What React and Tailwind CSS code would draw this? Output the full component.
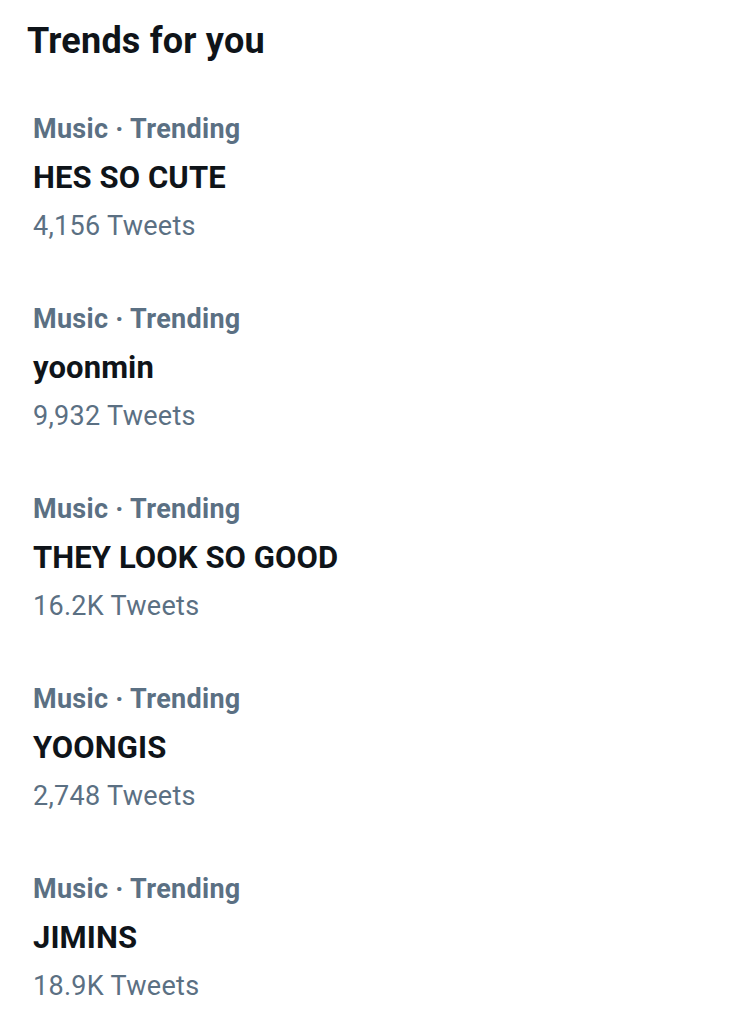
const trends = [
  { category: 'Music · Trending', name: 'HES SO CUTE', count: '4,156 Tweets' },
  { category: 'Music · Trending', name: 'yoonmin', count: '9,932 Tweets' },
  { category: 'Music · Trending', name: 'THEY LOOK SO GOOD', count: '16.2K Tweets' },
  { category: 'Music · Trending', name: 'YOONGIS', count: '2,748 Tweets' },
  { category: 'Music · Trending', name: 'JIMINS', count: '18.9K Tweets' },
];

const TrendItem = ({ trend }) => {
  return (
    <div className="pl-[33px] h-[190px]">
      <div className="h-[50px] text-[27px] leading-[50px] tracking-[0.3px] font-bold text-[#5b7083]">
        {trend.category}
      </div>
      <div className="h-[48px] text-[31px] leading-[48px] tracking-[0.1px] font-bold text-[#0f1419]">
        {trend.name}
      </div>
      <div className="h-[49px] text-[27px] leading-[49px] tracking-[0.3px] text-[#5b7083]">
        {trend.count}
      </div>
    </div>
  );
};

const App = () => {
  return (
    <div className="w-[753px] h-[1024px] bg-white overflow-hidden font-['Roboto',sans-serif]">
      <div className="pt-[21px] pl-[27px] h-[104px]">
        <h2 className="text-[36px] leading-[40px] tracking-[0.2px] font-bold text-[#0f1419]">Trends for you</h2>
      </div>
      {trends.map((trend, index) => (
        <TrendItem key={index} trend={trend} />
      ))}
    </div>
  );
};

export default App;
